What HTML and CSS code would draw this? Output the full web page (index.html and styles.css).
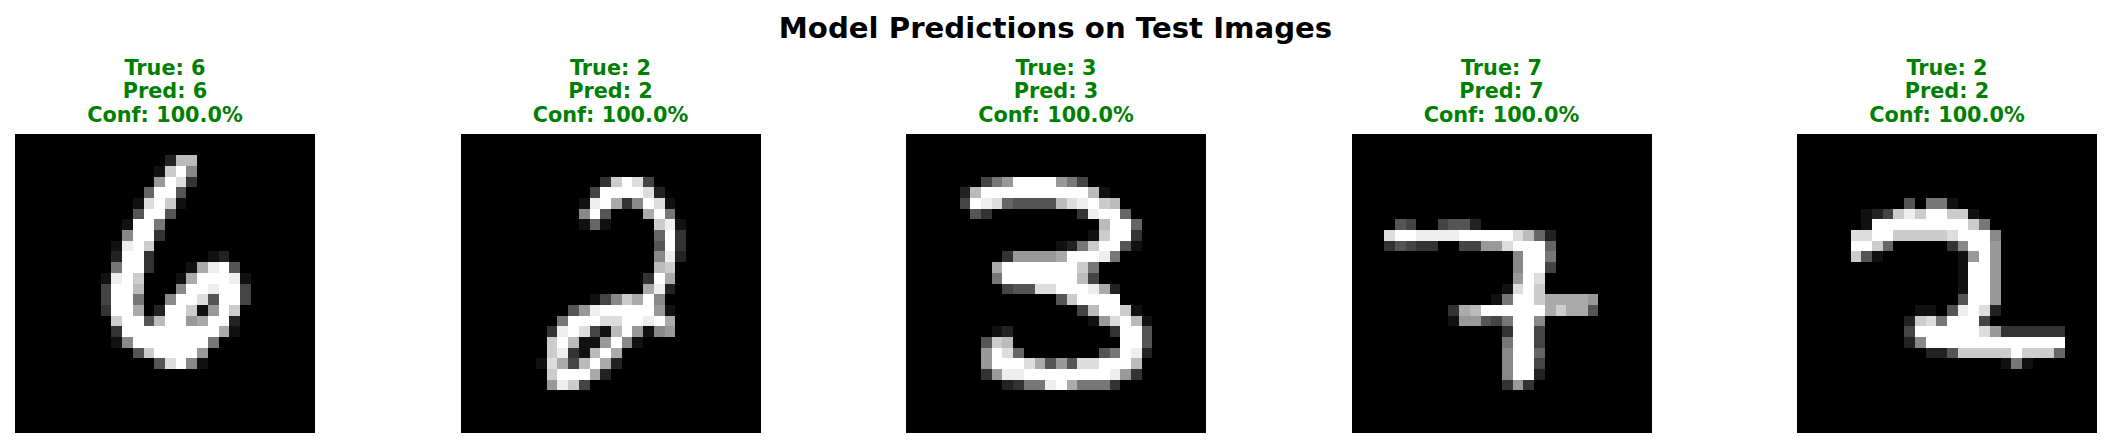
FILE: index.html
```html
<!DOCTYPE html>
<html lang="en">
<head>
    <meta charset="UTF-8">
    <title>Model Predictions on Test Images</title>
    <link rel="stylesheet" href="styles.css">
</head>
<body>
    <h1>Model Predictions on Test Images</h1>

    <div class="panels">
        <figure class="panel">
            <figcaption>True: 6<br>Pred: 6<br>Conf: 100.0%</figcaption>
            <canvas id="digit-0" width="28" height="28"></canvas>
        </figure>
        <figure class="panel">
            <figcaption>True: 2<br>Pred: 2<br>Conf: 100.0%</figcaption>
            <canvas id="digit-1" width="28" height="28"></canvas>
        </figure>
        <figure class="panel">
            <figcaption>True: 3<br>Pred: 3<br>Conf: 100.0%</figcaption>
            <canvas id="digit-2" width="28" height="28"></canvas>
        </figure>
        <figure class="panel">
            <figcaption>True: 7<br>Pred: 7<br>Conf: 100.0%</figcaption>
            <canvas id="digit-3" width="28" height="28"></canvas>
        </figure>
        <figure class="panel">
            <figcaption>True: 2<br>Pred: 2<br>Conf: 100.0%</figcaption>
            <canvas id="digit-4" width="28" height="28"></canvas>
        </figure>
    </div>

    <script src="script.js"></script>
</body>
</html>
```

FILE: styles.css
```css
/* Basic styling */
body {
    font-family: "DejaVu Sans", sans-serif;
    margin: 0;
    padding: 0;
    background-color: #fff;
    color: #000;
}
h1 {
    margin: 0;
    padding-top: 11px;
    font-size: 29.2px;
    line-height: 34px;
    font-weight: bold;
    text-align: center;
}

/* Digit panels */
.panels {
    display: flex;
    justify-content: space-between;
    padding: 12px 14px 0 15px;
}
.panel {
    width: 300px;
    margin: 0;
}
.panel figcaption {
    margin-bottom: 7px;
    font-size: 20.8px;
    line-height: 23.3px;
    font-weight: bold;
    text-align: center;
    color: #008000;
}
.panel canvas {
    display: block;
    width: 300px;
    height: 299px;
    image-rendering: pixelated;
}
```

FILE: script.js
```js
// each digit: first row, then [first column, one hex grey per pixel] for every row
const digits = [
    { top: 2, rows: [
        [14, "2bb"], [13, "1cf8"], [13, "9fd3"], [12, "6ff5"], [11, "1dfc1"], [11, "5ff5"],
        [10, "1ff7"], [10, "8ff3"], [9, "1efc"], [9, "2ff30000012"], [9, "7ff30001aef5"],
        [8, "1efc0001afffe1"], [8, "4ffb0008ffeff4"], [8, "4ff7008ffd5ff4"], [8, "3ffa02ffc19fc"],
        [9, "cff5bff9aff2"], [9, "3fffffffffa1"], [9, "18fffffff7"], [11, "5cffff9"], [13, "5df81"]
    ] },
    { top: 4, rows: [
        [13, "3cfd4"], [12, "4ffffd2"], [11, "1efa38fd1"], [11, "8f5000af7"], [11, "1610000ce1"],
        [18, "6f3"], [18, "5f3"], [18, "8e2"], [18, "bc"], [17, "3fa"], [17, "ae2"],
        [12, "148caf8"], [10, "59efffff91"], [9, "7fffddffefa"], [8, "3efd41bf9189"],
        [8, "cfb119f81"], [8, "ce31bfa"], [7, "1da4bfa2"], [8, "cfffa2"], [8, "9ec4"]
    ] },
    { top: 4, rows: [
        [7, "479ffff974"], [5, "2bffffffffffb1"], [5, "4fed65555bdefcb"], [6, "53000000003eff6"],
        [18, "bff6"], [17, "1cff3"], [14, "127cff51"], [9, "39999afffe7"], [8, "afffffffc7"],
        [8, "7fffffffb4"], [9, "455ddfffea2"], [14, "5cffff"], [16, "4bffc1"], [17, "19dfb1"],
        [8, "120000000003ff5"], [7, "5cb0000000000ff5"], [7, "9fd6000000057fe2"],
        [7, "9fffda595ddfffb"], [7, "39eeffffffffe93"], [9, "2377efa7773"]
    ] },
    { top: 8, rows: [
        [4, "54004552"], [3, "dffeeeefffffdb62"], [3, "35433004499dfff6"], [15, "8ff7"], [15, "8ff4"],
        [15, "9fd"], [14, "1dfc"], [13, "17ffcaaaa9"], [9, "3abffffffacaa5"], [9, "199547ff8"],
        [14, "3ff4"], [14, "7ff4"], [14, "8ff6"], [14, "8ff4"], [14, "8ff2"], [14, "393"]
    ] },
    { top: 6, rows: [
        [10, "50771"], [6, "124cecffcc1"], [6, "1fffffffffc7"], [5, "ddffcccccdfff8"],
        [5, "ffc60000038ff9"], [5, "c5100000001" + "9f9"], [15, "1ff9"], [15, "1ff9"], [15, "1ff9"],
        [15, "5ff9"], [11, "1105efd2"], [10, "2cd7fff4"], [10, "4ffffffd9333333"],
        [10, "28fffffffffffff"], [12, "225cccccfccc6"], [19, "171"]
    ] }
];

digits.forEach((digit, index) => {
    const ctx = document.getElementById("digit-" + index).getContext("2d");
    ctx.fillStyle = "#000";
    ctx.fillRect(0, 0, 28, 28);

    digit.rows.forEach(([col, greys], row) => {
        [...greys].forEach((hex, i) => {
            const v = parseInt(hex, 16) * 17;
            ctx.fillStyle = `rgb(${v}, ${v}, ${v})`;
            ctx.fillRect(col + i, digit.top + row, 1, 1);
        });
    });
});
```
